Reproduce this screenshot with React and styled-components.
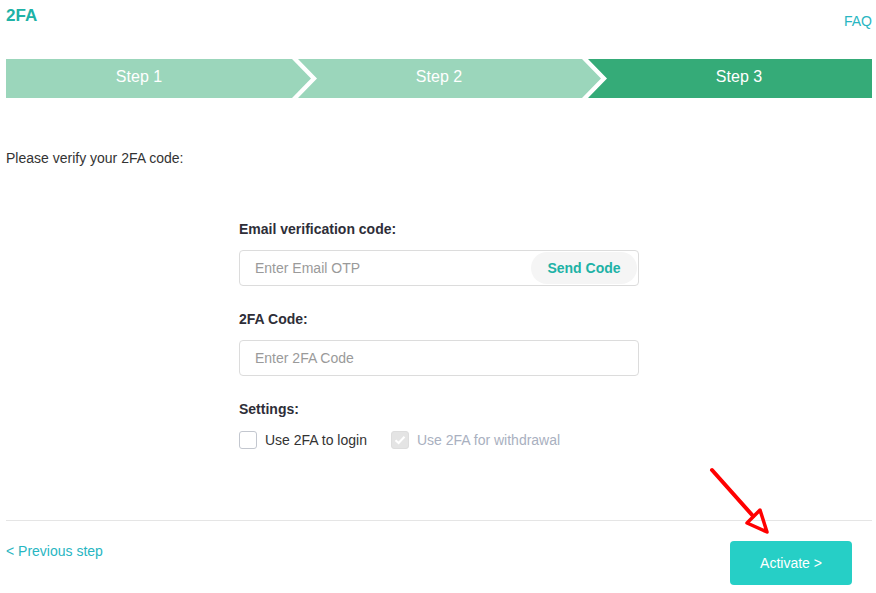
import styled, { createGlobalStyle } from "styled-components";

const GlobalStyle = createGlobalStyle`
  html, body {
    margin: 0;
    padding: 0;
    background: #ffffff;
  }
  body {
    font-family: "Liberation Sans", Arial, sans-serif;
    color: #333333;
  }
`;

const Page = styled.div`
  position: relative;
  width: 876px;
  height: 593px;
  box-sizing: border-box;
  padding: 0 4px 0 6px;
  overflow: hidden;
`;

const Header = styled.div`
  display: flex;
  justify-content: space-between;
  align-items: flex-start;
  height: 59px;
`;

const Title = styled.h1`
  margin: 5px 0 0;
  font-size: 17px;
  line-height: 21px;
  font-weight: 700;
  color: #20b2a6;
`;

const Link = styled.a`
  font-size: 14px;
  line-height: 20px;
  color: #28b6c2;
  text-decoration: none;
  cursor: pointer;
`;

const Faq = styled(Link)`
  margin-top: 11px;
`;

const Steps = styled.div`
  display: flex;
  height: 39px;
`;

const Step = styled.div`
  flex: 0 0 ${(p) => p.$width}px;
  margin-left: ${(p) => (p.$first ? 0 : -13)}px;
  box-sizing: border-box;
  padding: ${(p) => p.$pad};
  background: ${(p) => (p.$active ? "#35ab78" : "#9bd6bb")};
  color: #ffffff;
  font-size: 16px;
  line-height: 35px;
  text-align: center;
  clip-path: ${(p) =>
    p.$first
      ? "polygon(0 0, calc(100% - 19px) 0, 100% 50%, calc(100% - 19px) 100%, 0 100%)"
      : p.$last
      ? "polygon(0 0, 100% 0, 100% 100%, 0 100%, 19px 50%)"
      : "polygon(0 0, calc(100% - 19px) 0, 100% 50%, calc(100% - 19px) 100%, 0 100%, 19px 50%)"};
`;

const Intro = styled.p`
  margin: 50px 0 0;
  font-size: 14px;
  line-height: 20px;
  color: #333333;
`;

const Form = styled.div`
  display: flex;
  flex-direction: column;
  width: 400px;
  margin: 51px 0 0 233px;
`;

const Label = styled.div`
  margin-top: ${(p) => (p.$first ? 0 : 23)}px;
  font-size: 14px;
  line-height: 20px;
  font-weight: 700;
  color: #2e2e38;
`;

const InputBox = styled.div`
  display: flex;
  align-items: center;
  height: 36px;
  margin-top: ${(p) => p.$gap || 11}px;
  box-sizing: border-box;
  border: 1px solid #dcdcdc;
  border-radius: 4px;
  padding: 0 1px 0 15px;
`;

const Input = styled.input`
  flex: 1;
  min-width: 0;
  border: none;
  outline: none;
  background: transparent;
  font-family: "Liberation Sans", Arial, sans-serif;
  font-size: 14px;
  color: #333333;
  padding: 0;

  &::placeholder {
    color: #9a9a9a;
  }
`;

const SendButton = styled.button`
  height: 32px;
  width: 106px;
  border: none;
  border-radius: 16px;
  background: #f5f5f5;
  color: #20b2a6;
  font-family: "Liberation Sans", Arial, sans-serif;
  font-size: 14px;
  font-weight: 700;
  cursor: pointer;
  padding: 0;
`;

const CheckRow = styled.div`
  display: flex;
  align-items: center;
  gap: 24px;
  margin-top: 11px;
  height: 20px;
`;

const CheckItem = styled.label`
  display: flex;
  align-items: center;
  gap: 8px;
  font-size: 14px;
  line-height: 20px;
  color: ${(p) => (p.$disabled ? "#a9b0c0" : "#333333")};
`;

const Box = styled.span`
  display: flex;
  align-items: center;
  justify-content: center;
  width: 18px;
  height: 18px;
  box-sizing: border-box;
  border-radius: 3px;
  border: 1px solid ${(p) => (p.$checked ? "#dddddd" : "#c3c7cf")};
  background: ${(p) => (p.$checked ? "#e4e4e4" : "#ffffff")};
`;

const Divider = styled.hr`
  margin: 70px 0 0;
  border: none;
  border-top: 1px solid #e5e5e5;
`;

const Footer = styled.div`
  display: flex;
  justify-content: space-between;
  align-items: flex-start;
  padding: 0 20px 0 0;
`;

const PrevLink = styled(Link)`
  margin-top: 20px;
`;

const ActivateButton = styled.button`
  margin-top: 20px;
  width: 122px;
  height: 44px;
  border: none;
  border-radius: 4px;
  background: #26cfc6;
  color: #ffffff;
  font-family: "Liberation Sans", Arial, sans-serif;
  font-size: 14px;
  cursor: pointer;
`;

const Annotation = styled.svg`
  position: absolute;
  left: 700px;
  top: 460px;
  pointer-events: none;
`;

function App() {
  return (
    <>
      <GlobalStyle />
      <Page>
        <Header>
          <Title>2FA</Title>
          <Faq>FAQ</Faq>
        </Header>

        <Steps>
          <Step $first $width={305} $pad="0 39px 0 0">
            Step 1
          </Step>
          <Step $width={303} $pad="0 21px 0 0">
            Step 2
          </Step>
          <Step $last $active $width={284} $pad="0 0 0 18px">
            Step 3
          </Step>
        </Steps>

        <Intro>Please verify your 2FA code:</Intro>

        <Form>
          <Label $first>Email verification code:</Label>
          <InputBox>
            <Input placeholder="Enter Email OTP" />
            <SendButton>Send Code</SendButton>
          </InputBox>

          <Label>2FA Code:</Label>
          <InputBox>
            <Input placeholder="Enter 2FA Code" />
          </InputBox>

          <Label>Settings:</Label>
          <CheckRow>
            <CheckItem>
              <Box />
              Use 2FA to login
            </CheckItem>
            <CheckItem $disabled>
              <Box $checked>
                <svg width="12" height="10" viewBox="0 0 12 10">
                  <path
                    d="M1.5 5.2 L4.6 8 L10.5 1.8"
                    fill="none"
                    stroke="#ffffff"
                    strokeWidth="2"
                  />
                </svg>
              </Box>
              Use 2FA for withdrawal
            </CheckItem>
          </CheckRow>
        </Form>

        <Divider />
        <Footer>
          <PrevLink>&lt; Previous step</PrevLink>
          <ActivateButton>Activate &gt;</ActivateButton>
        </Footer>

        <Annotation width="80" height="80" viewBox="0 0 80 80">
          <path
            d="M12 10 L53 56"
            fill="none"
            stroke="#ff0000"
            strokeWidth="4"
            strokeLinecap="round"
          />
          <path
            d="M47 63 L60 50 L67 72 Z"
            fill="none"
            stroke="#ff0000"
            strokeWidth="3.5"
            strokeLinejoin="round"
          />
        </Annotation>
      </Page>
    </>
  );
}

export default App;
